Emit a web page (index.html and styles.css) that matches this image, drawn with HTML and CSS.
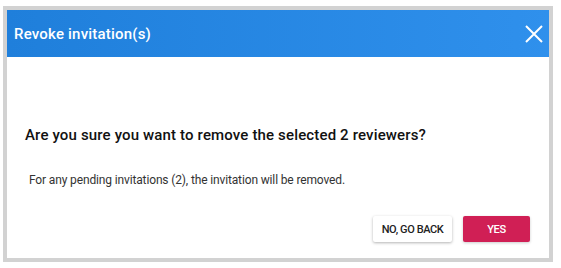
FILE: index.html
```html
<!DOCTYPE html>
<html lang="en">
<head>
  <meta charset="UTF-8">
  <title>Revoke invitation(s)</title>
  <link rel="stylesheet" href="styles.css">
</head>
<body>
  <div class="dialog">
    <!-- Header -->
    <header class="dialog-header">
      <h1>Revoke invitation(s)</h1>
      <button class="close" aria-label="Close">
        <svg width="18" height="18" viewBox="0 0 18 18">
          <path d="M1 1 L17 17 M17 1 L1 17" stroke="#fff" stroke-width="2" fill="none"/>
        </svg>
      </button>
    </header>

    <!-- Body -->
    <section class="dialog-body">
      <h2>Are you sure you want to remove the selected 2 reviewers?</h2>
      <p>For any pending invitations (2), the invitation will be removed.</p>
    </section>

    <!-- Actions -->
    <footer class="dialog-actions">
      <button class="btn btn-secondary">No, go back</button>
      <button class="btn btn-primary">Yes</button>
    </footer>
  </div>
</body>
</html>
```

FILE: styles.css
```css
body {
  margin: 0;
  padding: 6px 8px 6px 3px;
  background: #fff;
  font-family: Roboto, 'Liberation Sans', sans-serif;
}

.dialog {
  border: 4px solid #d2d2d2;
  background: #fff;
  height: 248px;
  display: flex;
  flex-direction: column;
}

.dialog-header {
  height: 47px;
  flex-shrink: 0;
  display: flex;
  align-items: center;
  justify-content: space-between;
  padding: 0 6px 0 7px;
  background: linear-gradient(to right, #1f7fdb, #2f90ec);
}

.dialog-header h1 {
  margin: 0;
  color: #fff;
  font-size: 15px;
  font-weight: 500;
  letter-spacing: 0.2px;
}

.close {
  background: none;
  border: none;
  padding: 0;
  width: 18px;
  height: 18px;
  cursor: pointer;
}

.dialog-body {
  flex: 1;
  padding: 68px 18px 0;
}

.dialog-body h2 {
  margin: 0;
  font-size: 15px;
  font-weight: 500;
  line-height: 20px;
  letter-spacing: 0.15px;
  color: #111;
}

.dialog-body p {
  margin: 27px 0 0 4px;
  font-size: 12px;
  line-height: 16px;
  letter-spacing: -0.14px;
  color: #333;
}

.dialog-actions {
  display: flex;
  justify-content: flex-end;
  gap: 11px;
  padding: 0 19px 16px;
}

.btn {
  height: 26px;
  padding: 0;
  border: none;
  border-radius: 2px;
  font-family: Roboto, 'Liberation Sans', sans-serif;
  font-size: 11px;
  font-weight: 500;
  letter-spacing: -0.4px;
  text-transform: uppercase;
  white-space: nowrap;
  cursor: pointer;
}

.btn-secondary {
  width: 79px;
  background: #fff;
  color: #222;
  box-shadow: 0 1px 3px rgba(0, 0, 0, 0.3);
}

.btn-primary {
  width: 67px;
  background: #d01f55;
  color: #fff;
  box-shadow: 0 1px 3px rgba(0, 0, 0, 0.2);
}
```
